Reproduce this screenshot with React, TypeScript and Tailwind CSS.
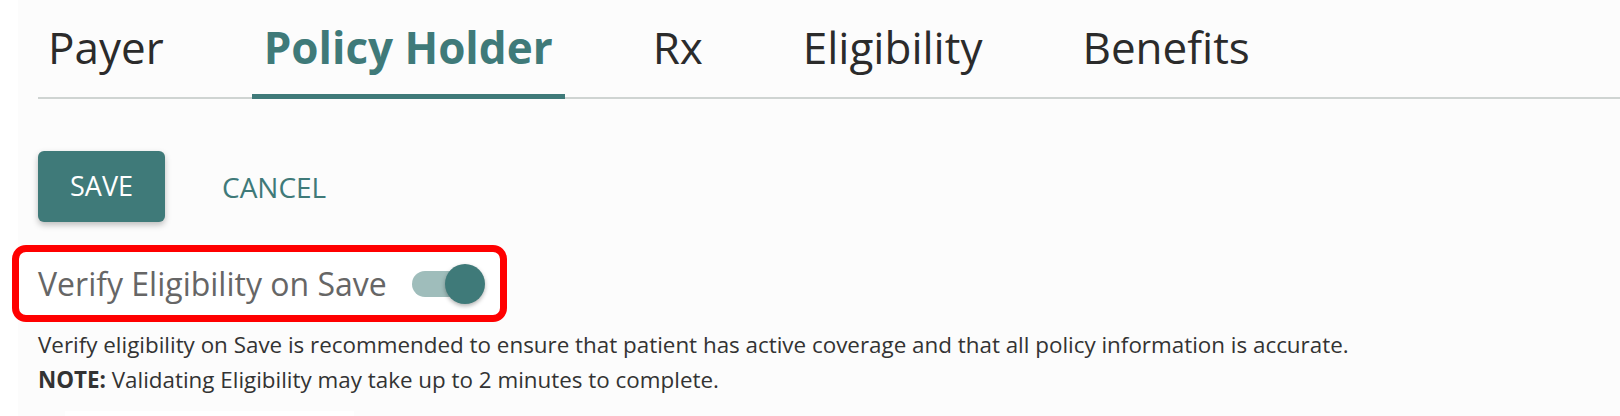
import React, { useState } from 'react';

const tabs = ['Payer', 'Policy Holder', 'Rx', 'Eligibility', 'Benefits'];

export default function App() {
  const [active, setActive] = useState(1);
  const [verify, setVerify] = useState(true);

  return (
    <div className="flex h-[416px] w-full bg-white font-['Open_Sans',sans-serif] overflow-hidden">
      <div className="w-[18px] shrink-0 bg-white" />
      <div className="flex-1 bg-[#fcfcfc] pl-[20px] flex flex-col">
        <div className="flex items-end h-[99px] border-b-2 border-[#cfd4d2]">
          <div className="flex items-end gap-[76px] -ml-[2px]">
            {tabs.map((t, i) => (
              <button
                key={t}
                onClick={() => setActive(i)}
                className={
                  i === active
                    ? 'px-3 pb-[25px] -mb-[2px] border-b-[5px] border-[#3f7a79] text-[44px] leading-none font-bold text-[#3f7a79]'
                    : 'px-3 pb-[25px] -mb-[2px] border-b-[5px] border-transparent text-[44px] leading-none text-[#2b2b2b]'
                }
              >
                {t}
              </button>
            ))}
          </div>
        </div>

        <div className="flex items-center gap-[57px] mt-[52px]">
          <button className="w-[127px] h-[71px] rounded-[6px] bg-[#3f7a79] text-white text-[27px] shadow-[0_3px_6px_rgba(0,0,0,0.25)]">
            SAVE
          </button>
          <button className="text-[28px] text-[#3f7a79]">CANCEL</button>
        </div>

        <div className="-ml-[26px] mt-[23px] w-[495px] h-[77px] border-[7px] border-[#ff0000] rounded-[14px] bg-white flex items-center pl-[19px]">
          <span className="text-[32px] text-[#666666]">Verify Eligibility on Save</span>
          <button
            onClick={() => setVerify(!verify)}
            className="relative ml-[25px] w-[60px] h-[26px] rounded-full bg-[#9fbdbb]"
          >
            <span className="absolute -right-[13px] -top-[7px] w-10 h-10 rounded-full bg-[#3f7a79] shadow-[0_2px_4px_rgba(0,0,0,0.3)]" />
          </button>
        </div>

        <div className="mt-[5px] text-[22.4px] leading-[35px] text-[#333333]">
          <p>Verify eligibility on Save is recommended to ensure that patient has active coverage and that all policy information is accurate.</p>
          <p>
            <span className="font-bold">NOTE:</span> Validating Eligibility may take up to 2 minutes to complete.
          </p>
        </div>
        <div className="mt-auto ml-[27px] w-[289px] h-[5px] bg-white" />
      </div>
    </div>
  );
}
